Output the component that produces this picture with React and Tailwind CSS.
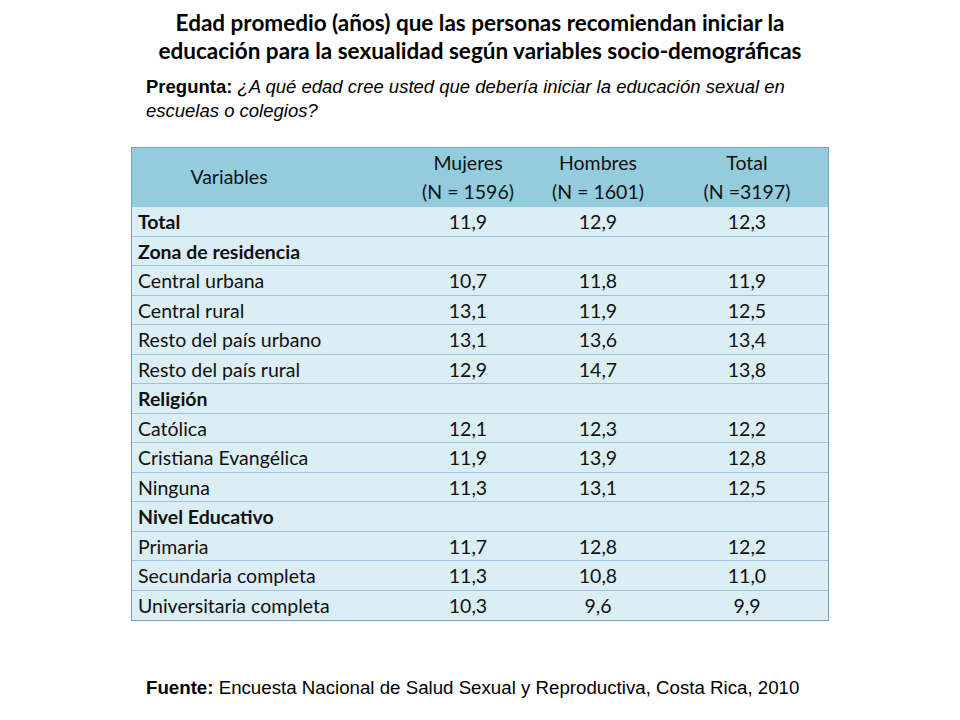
const ROWS = [
  { label: "Total", bold: true, v: ["11,9", "12,9", "12,3"] },
  { label: "Zona de residencia", bold: true },
  { label: "Central urbana", v: ["10,7", "11,8", "11,9"] },
  { label: "Central rural", v: ["13,1", "11,9", "12,5"] },
  { label: "Resto del país urbano", v: ["13,1", "13,6", "13,4"] },
  { label: "Resto del país rural", v: ["12,9", "14,7", "13,8"] },
  { label: "Religión", bold: true },
  { label: "Católica", v: ["12,1", "12,3", "12,2"] },
  { label: "Cristiana Evangélica", v: ["11,9", "13,9", "12,8"] },
  { label: "Ninguna", v: ["11,3", "13,1", "12,5"] },
  { label: "Nivel Educativo", bold: true },
  { label: "Primaria", v: ["11,7", "12,8", "12,2"] },
  { label: "Secundaria completa", v: ["11,3", "10,8", "11,0"] },
  { label: "Universitaria completa", v: ["10,3", "9,6", "9,9"] },
];

const COLS = "grid grid-cols-[274px_124px_136px_162px]";

export default function App() {
  return (
    <div className="w-[960px] h-[720px] bg-white text-black flex flex-col items-center">
      <h1
        className="mt-[9px] text-[22.5px] leading-[28px] font-bold text-center whitespace-nowrap"
        style={{ fontFamily: "Lato, 'Open Sans', sans-serif" }}
      >
        Edad promedio (años) que las personas recomiendan iniciar la
        <br />
        educación para la sexualidad según variables socio-demográficas
      </h1>

      <div
        className="self-start ml-[146px] mt-[10px] text-[18.5px] leading-[24px] whitespace-nowrap"
        style={{ fontFamily: "'Liberation Sans', Arial, sans-serif" }}
      >
        <div>
          <span className="font-bold mr-[5px]">Pregunta:</span>
          <span className="italic">¿A qué edad cree usted que debería iniciar la educación sexual en</span>
        </div>
        <div className="italic">escuelas o colegios?</div>
      </div>

      <div
        className="self-start ml-[131px] mt-[24px] border border-[#7b9ecb] text-[19.5px] text-[#111]"
        style={{ fontFamily: "Lato, 'Open Sans', sans-serif" }}
      >
        <div className={`${COLS} h-[59px] bg-[#93cddd] border-b border-[#9dbfe0]`}>
          <div className="flex items-center justify-center pr-[80px]">Variables</div>
          {[
            ["Mujeres", "(N = 1596)"],
            ["Hombres", "(N = 1601)"],
            ["Total", "(N =3197)"],
          ].map(([a, b]) => (
            <div key={a} className="flex flex-col items-center justify-center leading-[29px]">
              <span>{a}</span>
              <span>{b}</span>
            </div>
          ))}
        </div>
        {ROWS.map((r, i) => (
          <div
            key={r.label}
            className={`${COLS} h-[29.5px] bg-[#dbeef4] items-center ${
              i < ROWS.length - 1 ? "border-b border-[#9dbfe0]" : ""
            }`}
          >
            <div className={`pl-[6px] whitespace-nowrap ${r.bold ? "font-bold" : ""}`}>{r.label}</div>
            {(r.v || ["", "", ""]).map((x, j) => (
              <div key={j} className="text-center">
                {x}
              </div>
            ))}
          </div>
        ))}
      </div>

      <p
        className="self-start ml-[146px] mt-[56px] text-[18.7px] leading-[22px] whitespace-nowrap"
        style={{ fontFamily: "'Liberation Sans', Arial, sans-serif" }}
      >
        <span className="font-bold">Fuente: </span>
        Encuesta Nacional de Salud Sexual y Reproductiva, Costa Rica, 2010
      </p>
    </div>
  );
}
